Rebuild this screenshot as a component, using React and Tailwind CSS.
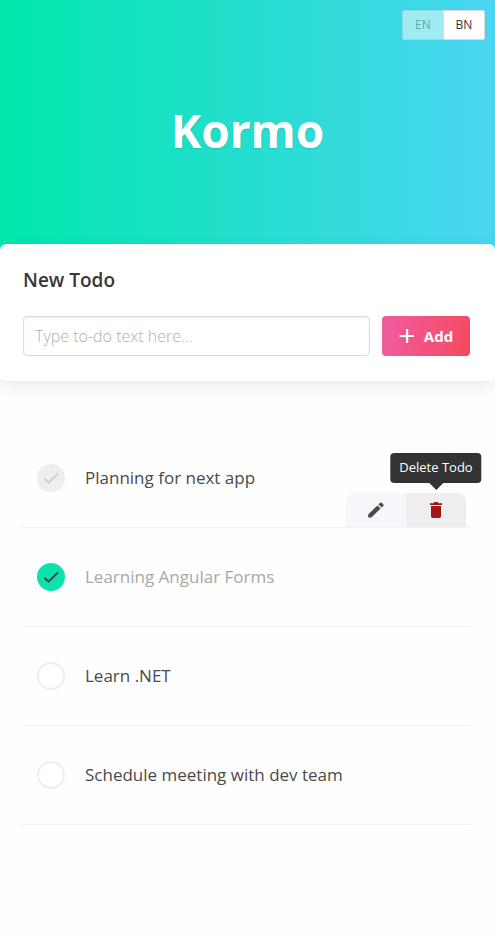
import { useState } from "react";

const initialTodos = [
  { id: 1, text: "Planning for next app", done: false, active: true },
  { id: 2, text: "Learning Angular Forms", done: true },
  { id: 3, text: "Learn .NET", done: false },
  { id: 4, text: "Schedule meeting with dev team", done: false },
];

function PencilIcon() {
  return (
    <svg width="18" height="18" viewBox="0 0 18 18" fill="currentColor" aria-hidden="true">
      <path d="M1.2 13.4 10.4 4.4l3.2 3.2-9.2 9H1.2z" />
      <path d="M11.4 3.4 13.2 1.7q.7-.6 1.4 0l1.8 1.8q.6.7 0 1.4l-1.8 1.7z" />
    </svg>
  );
}

function TrashIcon() {
  return (
    <svg width="18" height="18" viewBox="0 0 18 18" fill="currentColor" aria-hidden="true">
      <path d="M3 2.2h3.4L7.2 1h3.6l.8 1.2H15V4H3z" />
      <path d="M4 5h10v10.2q0 1.8-1.8 1.8H5.8Q4 17 4 15.2z" />
    </svg>
  );
}

function PlusIcon() {
  return (
    <svg width="16" height="16" viewBox="0 0 16 16" fill="currentColor" aria-hidden="true">
      <path d="M7 1h2.2v6H15v2H9.2v6H7V9H.5V7H7z" />
    </svg>
  );
}

function CheckIcon({ className }) {
  return (
    <svg
      width="20"
      height="20"
      viewBox="0 0 20 20"
      fill="none"
      stroke="currentColor"
      strokeWidth="1.8"
      className={className}
      aria-hidden="true"
    >
      <path d="M3.4 10.8 7.6 14.6 17 5.4" />
    </svg>
  );
}

function LanguageSwitch() {
  return (
    <div className="flex justify-end pt-[10px] pr-[10px] text-xs">
      <button
        type="button"
        disabled
        className="h-[30px] w-[42px] rounded-l-[2px] border border-[#8bdbe2] bg-[#a0ecf2] font-light text-[#2f8088]"
      >
        EN
      </button>
      <button
        type="button"
        className="-ml-px h-[30px] w-[42px] rounded-r-[2px] border border-[#dbdbdb] bg-white text-[#363636]"
      >
        BN
      </button>
    </div>
  );
}

function Tooltip({ label }) {
  return (
    <span
      role="tooltip"
      className="absolute bottom-[calc(100%+10px)] left-1/2 flex h-[30px] -translate-x-1/2 items-center rounded bg-[#333333] px-[9px] text-[13px] whitespace-nowrap text-white"
    >
      {label}
      <span className="absolute top-full left-1/2 -translate-x-1/2 border-x-[7px] border-t-[7px] border-x-transparent border-t-[#333333]" />
    </span>
  );
}

function TodoActions() {
  return (
    <div className="mr-[5px] flex h-[34px] self-end">
      <button
        type="button"
        aria-label="Edit Todo"
        className="flex w-[60px] items-center justify-center rounded-tl-lg bg-[#f5f7fa] text-[#4a4a4a]"
      >
        <PencilIcon />
      </button>
      <button
        type="button"
        aria-label="Delete Todo"
        className="relative flex w-[60px] items-center justify-center rounded-tr-lg bg-[#eeeeee] text-[#a01818]"
      >
        <TrashIcon />
        <Tooltip label="Delete Todo" />
      </button>
    </div>
  );
}

function TodoItem({ todo, onToggle }) {
  const inputId = `todo-${todo.id}`;
  const circle = todo.done
    ? "bg-[#0be2ad]"
    : todo.active
      ? "bg-[#eeeeee]"
      : "border-2 border-[#eeeeee] bg-white";
  return (
    <li className="flex h-[99px] border-b border-[#f2f2f2]">
      <div className="flex flex-1 items-center gap-5 pl-[15px]">
        <span className="relative flex">
          <input
            id={inputId}
            type="checkbox"
            checked={todo.done}
            onChange={onToggle}
            className={`size-7 appearance-none rounded-full ${circle}`}
          />
          {(todo.done || todo.active) && (
            <CheckIcon
              className={`pointer-events-none absolute inset-1 ${todo.done ? "text-[#363636]" : "text-[#cccccc]"}`}
            />
          )}
        </span>
        <label
          htmlFor={inputId}
          className={`text-[17px] whitespace-nowrap ${todo.done ? "text-[#a8a8a8]" : "text-[#4a4a4a]"}`}
        >
          {todo.text}
        </label>
      </div>
      {todo.active && <TodoActions />}
    </li>
  );
}

export default function App() {
  const [todos, setTodos] = useState(initialTodos);
  const [draft, setDraft] = useState("");

  const toggle = (id) =>
    setTodos(todos.map((t) => (t.id === id ? { ...t, done: !t.done } : t)));

  const add = (event) => {
    event.preventDefault();
    if (!draft.trim()) return;
    setTodos([...todos, { id: Date.now(), text: draft.trim(), done: false }]);
    setDraft("");
  };

  return (
    <div className="min-h-screen bg-[#fefefe] font-['Segoe_UI','Open_Sans','Noto_Sans',sans-serif] text-[#363636]">
      <header className="h-[250px] bg-[linear-gradient(90deg,#00e7ac,#4ad5f2)]">
        <LanguageSwitch />
        <h1 className="pt-[58px] text-center text-[46px] leading-[64px] font-bold text-white [text-shadow:0_1px_2px_rgba(0,0,0,0.12)]">
          Kormo
        </h1>
      </header>

      <main>
        <form
          onSubmit={add}
          className="relative -mt-[6px] rounded-md bg-white px-[23px] pt-6 pb-[25px] shadow-[0_6px_16px_rgba(0,0,0,0.08)]"
        >
          <label htmlFor="new-todo" className="block text-[19px] leading-6 font-semibold">
            New Todo
          </label>
          <div className="mt-6 mr-[2px] flex gap-3">
            <input
              id="new-todo"
              type="text"
              value={draft}
              onChange={(e) => setDraft(e.target.value)}
              placeholder="Type to-do text here..."
              className="h-10 min-w-0 flex-1 rounded border border-[#dbdbdb] bg-white px-[11px] text-base font-light shadow-[inset_0_1px_2px_rgba(10,10,10,0.08)] outline-none placeholder:text-[#b0b0b0]"
            />
            <button
              type="submit"
              className="flex h-10 w-[88px] items-center justify-center gap-[9px] rounded bg-[linear-gradient(100deg,#ef5c9c_5%,#f54b62_95%)] text-[15px] font-bold text-white"
            >
              <PlusIcon />
              Add
            </button>
          </div>
        </form>

        <ul className="mt-12 mr-6 ml-[22px]">
          {todos.map((todo) => (
            <TodoItem key={todo.id} todo={todo} onToggle={() => toggle(todo.id)} />
          ))}
        </ul>
      </main>
    </div>
  );
}
